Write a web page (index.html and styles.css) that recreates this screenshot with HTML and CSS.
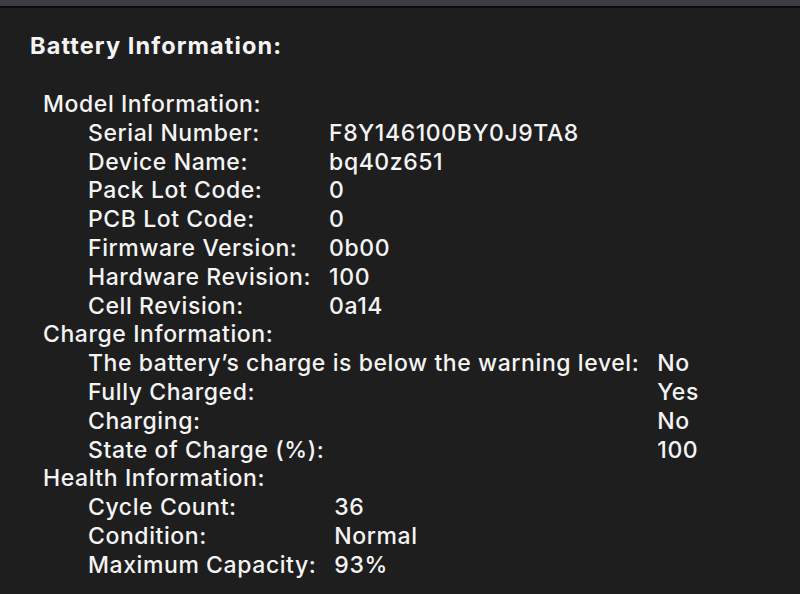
FILE: index.html
```html
<!DOCTYPE html>
<html lang="en">

<head>
  <meta charset="UTF-8">
  <title>Battery Information</title>
  <link rel="stylesheet" href="styles.css">
</head>

<body>
  <div id="titlebar"></div>

  <div id="report">
    <h1>Battery Information:</h1>

    <div class="section">
      <div class="section-title">Model Information:</div>
      <div class="rows">
        <span>Serial Number:</span><span>F8Y146100BY0J9TA8</span>
        <span>Device Name:</span><span>bq40z651</span>
        <span>Pack Lot Code:</span><span>0</span>
        <span>PCB Lot Code:</span><span>0</span>
        <span>Firmware Version:</span><span>0b00</span>
        <span>Hardware Revision:</span><span>100</span>
        <span>Cell Revision:</span><span>0a14</span>
      </div>
    </div>

    <div class="section">
      <div class="section-title">Charge Information:</div>
      <div class="rows">
        <span>The battery’s charge is below the warning level:</span><span>No</span>
        <span>Fully Charged:</span><span>Yes</span>
        <span>Charging:</span><span>No</span>
        <span>State of Charge (%):</span><span>100</span>
      </div>
    </div>

    <div class="section">
      <div class="section-title">Health Information:</div>
      <div class="rows">
        <span>Cycle Count:</span><span>36</span>
        <span>Condition:</span><span>Normal</span>
        <span>Maximum Capacity:</span><span>93%</span>
      </div>
    </div>
  </div>
</body>

</html>
```

FILE: styles.css
```css
body {
  background-color: #1e1e1e;
  color: #f4f4f4;
  font-family: Inter, "Noto Sans", sans-serif;
  margin: 0;
  padding: 0;
  height: 594px;
  overflow: hidden;
}

#titlebar {
  height: 6px;
  background-color: #3c3c47;
  border-bottom: 2px solid #0c0c0c;
}

#report {
  padding: 24px 0 0 30px;
}

h1 {
  font-size: 23.5px;
  font-weight: 700;
  letter-spacing: 1.1px;
  margin: 0 0 30px 0;
  line-height: 28px;
}

.section {
  padding-left: 13px;
  font-size: 23px;
  font-weight: 500;
  letter-spacing: 0.58px;
  line-height: 28.8px;
}

.rows {
  display: grid;
  grid-template-columns: max-content max-content;
  column-gap: 18px;
  padding-left: 45px;
}
```
